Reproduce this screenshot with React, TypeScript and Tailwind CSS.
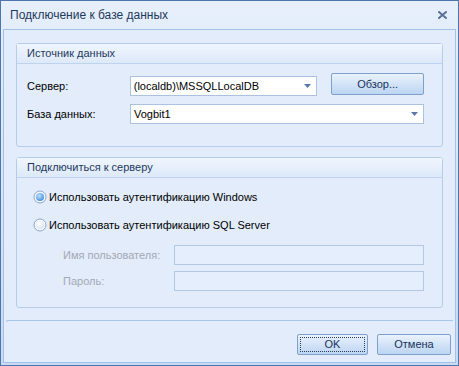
import React from "react";

const font = { fontFamily: '"Liberation Sans", Arial, sans-serif' };

function Caret() {
  return (
    <svg width="7" height="4" viewBox="0 0 7 4" className="shrink-0">
      <path d="M0 0h7L3.5 4z" fill="#5a78a8" />
    </svg>
  );
}

function Combo({ value, className }: { value: string; className: string }) {
  return (
    <div
      className={`flex h-[20px] items-center justify-between border border-[#abc2e0] bg-white pl-[3px] pr-[5px] text-[11px] text-black ${className}`}
    >
      <span>{value}</span>
      <Caret />
    </div>
  );
}

function Btn({ label, className, focused }: { label: string; className: string; focused?: boolean }) {
  return (
    <div
      className={`flex items-center justify-center rounded-[2px] border border-[#7f9fcc] bg-gradient-to-b from-[#eaf2fc] via-[#d3e3f7] to-[#bcd5f2] p-[2px] text-[11px] text-[#15335e] ${className}`}
    >
      <div
        className={`flex h-full w-full items-center justify-center ${focused ? "border border-dotted border-[#2b3f5c]" : ""}`}
      >
        {label}
      </div>
    </div>
  );
}

function Group({ title, children, className }: { title: string; children: React.ReactNode; className: string }) {
  return (
    <div className={`flex flex-col rounded-[3px] border border-[#b5cceb] bg-[#e2ecfb] ${className}`}>
      <div className="flex h-[20px] items-center border-b border-[#bed3ef] bg-gradient-to-b from-[#eff5fd] to-[#dde9f9] pl-[10px] text-[11px] text-[#1e395b]">
        {title}
      </div>
      {children}
    </div>
  );
}

function Radio({ checked, label }: { checked?: boolean; label: string }) {
  return (
    <div className="flex h-[16px] items-center gap-[2px] text-[11px] text-black">
      <svg width="14" height="14" viewBox="0 0 14 14" className="shrink-0">
        <defs>
          <radialGradient id={checked ? "rc" : "ru"} cx="0.4" cy="0.35" r="0.7">
            <stop offset="0" stopColor={checked ? "#bfe0ff" : "#ffffff"} />
            <stop offset="1" stopColor={checked ? "#3f8fe0" : "#d6e2f0"} />
          </radialGradient>
        </defs>
        <circle cx="7" cy="7" r="6" fill="#f4f8fd" stroke="#8ea6c6" strokeWidth="1" />
        <circle cx="7" cy="7" r="4" fill={`url(#${checked ? "rc" : "ru"})`} />
      </svg>
      <span>{label}</span>
    </div>
  );
}

export default function App() {
  return (
    <div
      style={font}
      className="flex h-[366px] w-[459px] flex-col border border-[#4f75ad] bg-gradient-to-b from-[#e6effb] to-[#c9dbf1]"
    >
      {/* title bar */}
      <div className="flex h-[28px] shrink-0 items-center justify-between pl-[9px] pr-[11px]">
        <span className="text-[12px] text-[#1e395b]">Подключение к базе данных</span>
        <svg width="9" height="8" viewBox="0 0 9 8">
          <path d="M1 1l7 6M8 1l-7 6" stroke="#5a7396" strokeWidth="2" strokeLinecap="square" />
        </svg>
      </div>

      {/* client area */}
      <div className="mx-[2px] mb-[2px] flex flex-1 flex-col border border-[#a2c1ea] bg-[#e2ecfb]">
        <div className="flex flex-col px-[12px] pt-[13px]">
          <Group title="Источник данных" className="h-[104px]">
            <div className="flex flex-col pl-[10px] pr-[18px] pt-[9px]">
              <div className="flex items-start">
                <span className="mt-[5px] w-[103px] text-[11px] text-black">Сервер:</span>
                <Combo value="(localdb)\MSSQLLocalDB" className="mt-[3px] w-[188px]" />
                <Btn label="Обзор..." className="ml-[14px] h-[22px] w-[93px]" />
              </div>
              <div className="mt-[8px] flex items-center">
                <span className="w-[103px] text-[11px] text-black">База данных:</span>
                <Combo value="Vogbit1" className="flex-1" />
              </div>
            </div>
          </Group>

          <Group title="Подключиться к серверу" className="mt-[10px] h-[151px]">
            <div className="flex flex-col pl-[16px] pr-[18px] pt-[11px]">
              <Radio checked label="Использовать аутентификацию Windows" />
              <div className="mt-[12px]">
                <Radio label="Использовать аутентификацию SQL Server" />
              </div>
              <div className="mt-[12px] flex items-center pl-[30px]">
                <span className="w-[111px] text-[11px] text-[#a2a9b4]">Имя пользователя:</span>
                <div className="h-[20px] flex-1 border border-[#b3c8e3] bg-[#e4eefc]" />
              </div>
              <div className="mt-[6px] flex items-center pl-[30px]">
                <span className="w-[111px] text-[11px] text-[#a2a9b4]">Пароль:</span>
                <div className="h-[20px] flex-1 border border-[#b3c8e3] bg-[#e4eefc]" />
              </div>
            </div>
          </Group>
        </div>

        <div className="mx-[2px] mt-[12px] h-[2px] rounded-tl-[3px] border-t border-l border-[#a7c6ee]" />

        <div className="mt-[12px] flex justify-end gap-[9px] pr-[4px]">
          <Btn label="OK" focused className="h-[21px] w-[71px]" />
          <Btn label="Отмена" className="h-[21px] w-[74px]" />
        </div>
      </div>
    </div>
  );
}
